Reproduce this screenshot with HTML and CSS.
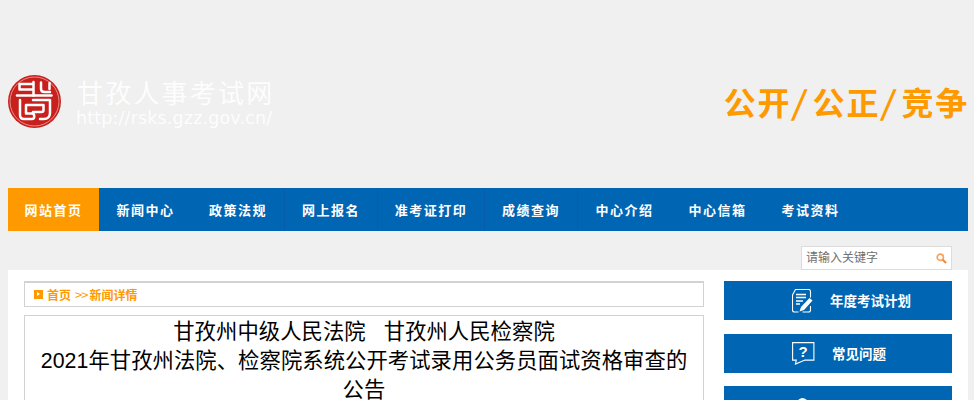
FILE: index.html
```html
<!DOCTYPE html>
<html lang="zh-CN">
<head>
<meta charset="utf-8">
<title>甘孜人事考试网</title>
<link rel="stylesheet" href="styles.css">
</head>
<body>
<header class="header">
  <div class="brand">
    <svg class="seal" viewBox="0 0 53 53" aria-hidden="true">
      <circle cx="26.500" cy="26.500" r="26.500" fill="#c8201d"/>
      <circle cx="26.500" cy="26.500" r="24.500" fill="none" stroke="#ecaaa6" stroke-width=".8"/>
      <g fill="none" stroke="#fff" stroke-width="2.500" stroke-linecap="round" stroke-linejoin="round">
        <path d="M25.500 9H11.500v5.500h14M25.500 7v13.500"/>
        <path d="M33 7.500v6.500c0 2 1.500 3 3.500 3H42M41.500 8v6"/>
        <path d="M9 20.500h34.500"/>
        <path d="M12 25v15c0 2.500 1.500 4 4 4h8c3 0 3-5.500 0-5.500H18V30h17.500v5c0 1.500-1 2-2 2H25"/>
        <path d="M25 25h17v13c0 3.500-2.500 6-6 6h-4"/>
      </g>
    </svg>
    <div class="brand-text">
      <div class="brand-name">甘孜人事考试网</div>
      <div class="brand-url">http://rsks.gzz.gov.cn/</div>
    </div>
  </div>
  <div class="motto">公开<span class="motto-slash">/</span>公正<span class="motto-slash">/</span>竞争</div>
</header>
<nav class="nav">
  <a class="nav-item nav-active">网站首页</a>
  <a class="nav-item">新闻中心</a>
  <a class="nav-item nav-line">政策法规</a>
  <a class="nav-item nav-line">网上报名</a>
  <a class="nav-item nav-line nav-wide">准考证打印</a>
  <a class="nav-item nav-line">成绩查询</a>
  <a class="nav-item">中心介绍</a>
  <a class="nav-item">中心信箱</a>
  <a class="nav-item">考试资料</a>
</nav>
<div class="search-row">
  <div class="search">
    <span class="search-text">请输入关键字</span>
    <svg class="search-icon" viewBox="0 0 12 12" aria-hidden="true">
      <circle cx="4.700" cy="4.700" r="3.400" fill="none" stroke="#f5a25c" stroke-width="1.800"/>
      <path d="M7.300 7.300l3.700 3.700" stroke="#ee8a3a" stroke-width="2.200"/>
    </svg>
  </div>
</div>
<main class="content">
  <section class="main-col">
    <div class="crumb">
      <span class="crumb-mark"></span>
      <span>首页</span><span class="crumb-sep">&gt;&gt;</span><span>新闻详情</span>
    </div>
    <article class="article">
      <h1 class="title">甘孜州中级人民法院&nbsp;&nbsp;&nbsp;甘孜州人民检察院<br>2021年甘孜州法院、检察院系统公开考试录用公务员面试资格审查的公告</h1>
    </article>
  </section>
  <aside class="side">
    <a class="side-btn">
      <svg class="side-icon" viewBox="0 0 21 24" aria-hidden="true">
        <g fill="none" stroke="#fff" stroke-width="1.100">
          <path d="M18.500 8.500V2.500Q18.500 .5 16.500 .5H3.500L.5 6v15Q.5 23 2.500 23H6.500M10.500 23H16.500Q18.500 23 18.500 21V17"/>
          <path d="M4 5.500h10M4 8.500h10M4 12h7M4 15h4" stroke-width="1.300"/>
        </g>
        <path d="M17.500 9l3 2.500L12 21l-4.500 1.500L9 18z" fill="#fff"/>
      </svg>
      <span class="side-label side-label-a">年度考试计划</span>
    </a>
    <a class="side-btn">
      <svg class="side-icon side-icon-q" viewBox="0 0 23 23" aria-hidden="true">
        <path d="M.6.6h21.300v17.500H13L3.500 22l.8-3.900H.6z" fill="none" stroke="#fff" stroke-width="1.100"/>
        <text class="q-mark" x="11" y="15" text-anchor="middle">?</text>
      </svg>
      <span class="side-label side-label-b">常见问题</span>
    </a>
    <a class="side-btn side-btn-last">
      <svg class="side-icon" viewBox="0 0 22 24" aria-hidden="true">
        <circle cx="11" cy="9" r="5.500" fill="#fff"/>
      </svg>
    </a>
  </aside>
</main>
</body>
</html>
```
FILE: styles.css
```css
* { box-sizing: border-box; }
html, body { margin: 0; padding: 0; }
body {
  width: 974px;
  height: 400px;
  overflow: hidden;
  background: #f0f0f0;
  font-family: "Liberation Sans", "Noto Sans CJK SC", sans-serif;
}
.header {
  height: 188px;
  padding: 75px 5px 0 8px;
  display: flex;
  justify-content: space-between;
  align-items: flex-start;
}
.brand { display: flex; align-items: flex-start; }
.seal { width: 53px; height: 53px; }
.brand-text { margin: 1px 0 0 15px; color: #fff; opacity: .9; }
.brand-name {
  margin-left: 1px;
  font-family: "Noto Sans CJK SC", sans-serif;
  font-size: 26px;
  line-height: 32px;
  letter-spacing: 2.200px;
  font-weight: 400;
  white-space: nowrap;
}
.brand-url {
  font-family: "DejaVu Sans", sans-serif;
  font-size: 17.500px;
  line-height: 20px;
  letter-spacing: .15px;
  white-space: nowrap;
}
.motto {
  margin-top: 6px;
  color: #ff9900;
  font-family: "Noto Sans CJK SC", sans-serif;
  font-weight: 700;
  font-size: 32px;
  line-height: 40px;
  letter-spacing: 1.800px;
  white-space: nowrap;
}
.motto-slash {
  display: inline-block;
  margin: 0 4px 0 3px;
  transform: skewX(-10deg);
}
.nav {
  width: 960px;
  height: 43px;
  margin-left: 8px;
  background: #0066b3;
  display: flex;
}
.nav-item {
  width: 93px;
  display: flex;
  align-items: center;
  justify-content: center;
  color: #fff;
  font-family: "Noto Sans CJK SC", sans-serif;
  font-weight: 700;
  font-size: 13px;
  letter-spacing: 1.500px;
}
.nav-active { width: 91px; background: #ff9900; }
.nav-line { border-right: 1px solid #0a5cab; }
.nav-wide { width: 107px; }
.search-row {
  height: 39px;
  padding: 15px 22px 0 0;
  display: flex;
  justify-content: flex-end;
}
.search {
  width: 151px;
  height: 24px;
  background: #fff;
  border: 1px solid #dcdcdc;
  display: flex;
  align-items: center;
  justify-content: space-between;
  padding: 0 4px;
}
.search-text {
  font-family: "Noto Sans CJK SC", sans-serif;
  font-size: 12px;
  line-height: 20px;
  margin-top: -2px;
  color: #707070;
}
.search-icon { width: 11px; height: 11px; }
.content {
  width: 960px;
  height: 130px;
  margin-left: 8px;
  background: #fff;
  padding: 11px 16px 0 16px;
  display: flex;
  justify-content: space-between;
  overflow: hidden;
}
.main-col { width: 680px; }
.crumb {
  height: 26px;
  border: 1px solid #d2d2d2;
  border-top-width: 2px;
  padding-left: 9px;
  display: flex;
  align-items: center;
  color: #ff9900;
  font-family: "Noto Sans CJK SC", sans-serif;
  font-weight: 700;
  font-size: 12px;
}
.crumb-mark {
  width: 9px;
  height: 9px;
  margin-right: 4px;
  background: #ff9900;
  position: relative;
}
.crumb-mark::after {
  content: "";
  position: absolute;
  left: 3px;
  top: 2px;
  border-left: 3px solid #fff;
  border-top: 2.500px solid transparent;
  border-bottom: 2.500px solid transparent;
}
.crumb-sep { margin: 0 2px 0 4px; font-weight: 400; font-size: 13px; letter-spacing: -1px; }
.article {
  margin-top: 8px;
  border: 1px solid #d2d2d2;
  padding: 2px 14px 0;
  height: 120px;
}
.title {
  margin: 0;
  text-align: center;
  font-weight: 400;
  font-family: "Liberation Sans", "Noto Sans CJK SC", sans-serif;
  font-size: 21.330px;
  line-height: 29px;
  letter-spacing: .06px;
  color: #000;
}
.side { width: 228px; }
.side-btn {
  height: 39px;
  margin-bottom: 14px;
  background: #0066b3;
  display: flex;
  align-items: center;
  position: relative;
  color: #fff;
}
.side-btn-last { margin-top: -1px; }
.side-icon { width: 21px; height: 24px; margin-left: 68px; flex: none; }
.side-icon-q { width: 23px; height: 23px; }
.q-mark { font: 700 15px "Liberation Sans", sans-serif; fill: #fff; }
.side-label {
  margin-top: -2px;
  font-family: "Noto Sans CJK SC", sans-serif;
  font-weight: 700;
  font-size: 13.500px;
  white-space: nowrap;
}
.side-label-a { margin-left: 17px; }
.side-label-b { margin-left: 17px; }
```
